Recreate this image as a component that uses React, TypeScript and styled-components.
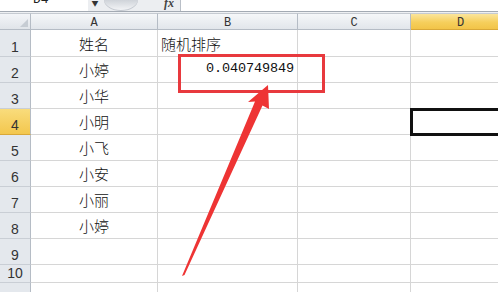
import React from "react";
import styled, { createGlobalStyle } from "styled-components";

const Global = createGlobalStyle`
  html, body { margin: 0; padding: 0; background: #ffffff; }
  body { font-family: "Noto Sans CJK SC", "Liberation Sans", sans-serif; }
`;

const Page = styled.div`
  position: relative;
  width: 498px;
  height: 292px;
  overflow: hidden;
  background: #ffffff;
`;

const FormulaBar = styled.div`
  display: flex;
  height: 11px;
  background: #eceef1;
  border-bottom: 1px solid #a3aab3;
`;

const NameBox = styled.div`
  width: 88px;
  background: #ffffff;
  display: flex;
  align-items: flex-end;
  overflow: hidden;
  padding-left: 33px;
  box-sizing: border-box;
  padding-bottom: 5px;
  font-family: "Liberation Mono", monospace;
  font-size: 13px;
  line-height: 13px;
  color: #222;
`;

const DropArrow = styled.div`
  width: 14px;
  display: flex;
  justify-content: center;
  align-items: flex-start;
  font-size: 7px;
  line-height: 6px;
  color: #333;
`;

const Knob = styled.div`
  width: 34px;
  height: 11px;
  margin-left: 2px;
  border-radius: 0 0 17px 17px / 0 0 11px 11px;
  background: linear-gradient(180deg, #cfd3d9 0%, #f6f7f9 100%);
  box-shadow: inset 0 -1px 0 #c3c8cf;
`;

const Fx = styled.div`
  width: 42px;
  display: flex;
  justify-content: flex-end;
  padding-right: 6px;
  box-sizing: border-box;
  align-items: flex-start;
  font-family: "Liberation Serif", serif;
  font-style: italic;
  font-weight: bold;
  font-size: 12px;
  line-height: 6px;
  color: #444;
  overflow: hidden;
`;

const FormulaInput = styled.div`
  flex: 1;
  background: #ffffff;
  border-left: 1px solid #b9bfc7;
`;

const Gap = styled.div`
  height: 1px;
  background: #eef0f3;
`;

const Sheet = styled.div`
  display: grid;
  grid-template-columns: 31px 127px 140px 113px 100px;
  grid-auto-rows: auto;
`;

const Corner = styled.div`
  height: 17px;
  box-sizing: border-box;
  border-top: 1px solid #c5cad1;
  border-right: 1px solid #b5bcc5;
  border-bottom: 1px solid #b5bcc5;
  background: linear-gradient(180deg, #f3f5f8 0%, #e0e4e9 100%);
  position: relative;
  &::after {
    content: "";
    position: absolute;
    right: 2px;
    bottom: 2px;
    border-left: 8px solid transparent;
    border-bottom: 8px solid #c6ccd3;
  }
`;

const ColHead = styled.div<{ $active?: boolean }>`
  height: 17px;
  box-sizing: border-box;
  border-top: 1px solid #c5cad1;
  border-right: 1px solid #b5bcc5;
  border-bottom: 1px solid ${(p) => (p.$active ? "#d9a838" : "#b5bcc5")};
  background: ${(p) =>
    p.$active
      ? "linear-gradient(180deg, #fbe59c 0%, #f6cf5c 55%, #f2c448 100%)"
      : "linear-gradient(180deg, #f5f7f9 0%, #e2e6eb 100%)"};
  display: flex;
  align-items: center;
  justify-content: center;
  padding-top: 2px;
  font-family: "Liberation Mono", monospace;
  font-size: 12px;
  color: #333;
`;

const RowHead = styled.div<{ $h: number; $active?: boolean }>`
  height: ${(p) => p.$h}px;
  box-sizing: border-box;
  border-right: 1px solid #b5bcc5;
  border-bottom: 1px solid ${(p) => (p.$active ? "#d9a838" : "#c9ced5")};
  background: ${(p) =>
    p.$active
      ? "linear-gradient(180deg, #f9dc7c 0%, #f3c74e 100%)"
      : "#e4e8ed"};
  display: flex;
  align-items: flex-end;
  justify-content: center;
  padding-bottom: 2px;
  font-family: "Liberation Sans", sans-serif;
  font-size: 14px;
  line-height: 14px;
  color: #333;
`;

const Cell = styled.div<{ $h: number; $align?: "left" | "center" | "right"; $mono?: boolean }>`
  height: ${(p) => p.$h}px;
  box-sizing: border-box;
  border-right: 1px solid #d6d6d6;
  border-bottom: 1px solid #d6d6d6;
  display: flex;
  align-items: flex-end;
  justify-content: ${(p) =>
    p.$align === "center" ? "center" : p.$align === "right" ? "flex-end" : "flex-start"};
  padding: 0 3px 3px 3px;
  font-family: ${(p) =>
    p.$mono ? '"Liberation Mono", monospace' : '"Noto Sans CJK SC", sans-serif'};
  font-size: ${(p) => (p.$mono ? "13.5px" : "15px")};
  letter-spacing: ${(p) => (p.$mono ? "-0.1px" : "0")};
  line-height: ${(p) => (p.$mono ? "16px" : "18px")};
  padding-bottom: ${(p) => (p.$mono ? "5px" : "3px")};
  color: #111;
  font-weight: 300;
  white-space: nowrap;
  overflow: hidden;
`;

const RedBox = styled.div`
  position: absolute;
  left: 178px;
  top: 54px;
  width: 147px;
  height: 39px;
  box-sizing: border-box;
  border: 3px solid #e8393e;
`;

const Selection = styled.div`
  position: absolute;
  left: 410px;
  top: 108px;
  width: 100px;
  height: 28px;
  box-sizing: border-box;
  border: 3px solid #111;
`;

const ArrowSvg = styled.svg`
  position: absolute;
  left: 0;
  top: 0;
  pointer-events: none;
`;

const Watermark = styled.div`
  position: absolute;
  left: 398px;
  top: 238px;
  font-family: "Noto Sans CJK SC", sans-serif;
  font-size: 16px;
  font-weight: bold;
  color: rgba(0, 0, 0, 0.025);
  white-space: nowrap;
`;

const rows: { n: number; h: number; a?: string; b?: string }[] = [
  { n: 1, h: 27, a: "姓名", b: "随机排序" },
  { n: 2, h: 26, a: "小婷" },
  { n: 3, h: 26, a: "小华" },
  { n: 4, h: 26, a: "小明" },
  { n: 5, h: 26, a: "小飞" },
  { n: 6, h: 26, a: "小安" },
  { n: 7, h: 26, a: "小丽" },
  { n: 8, h: 26, a: "小婷" },
  { n: 9, h: 26 },
  { n: 10, h: 18 },
  { n: 11, h: 26 },
];

export default function App() {
  return (
    <Page>
      <Global />
      <FormulaBar>
        <NameBox>D4</NameBox>
        <DropArrow>▼</DropArrow>
        <Knob />
        <Fx>fx</Fx>
        <FormulaInput />
      </FormulaBar>
      <Gap />
      <Sheet>
        <Corner />
        <ColHead>A</ColHead>
        <ColHead>B</ColHead>
        <ColHead>C</ColHead>
        <ColHead $active>D</ColHead>
        {rows.map((r) => (
          <React.Fragment key={r.n}>
            <RowHead $h={r.h} $active={r.n === 4}>
              {r.n}
            </RowHead>
            <Cell $h={r.h} $align="center">
              {r.a}
            </Cell>
            {r.n === 1 ? (
              <Cell $h={r.h} $align="left">
                {r.b}
              </Cell>
            ) : r.n === 2 ? (
              <Cell $h={r.h} $align="right" $mono>
                0.040749849
              </Cell>
            ) : (
              <Cell $h={r.h} />
            )}
            <Cell $h={r.h} />
            <Cell $h={r.h} />
          </React.Fragment>
        ))}
      </Sheet>
      <RedBox />
      <Selection />
      <ArrowSvg width="498" height="292" viewBox="0 0 498 292">
        <polygon
          points="268,85 248,102 255,101.5 182,276 184.5,275 262.5,105.5 269,109"
          fill="#ee3434"
        />
      </ArrowSvg>
      <Watermark>S 搜狐指南</Watermark>
    </Page>
  );
}
